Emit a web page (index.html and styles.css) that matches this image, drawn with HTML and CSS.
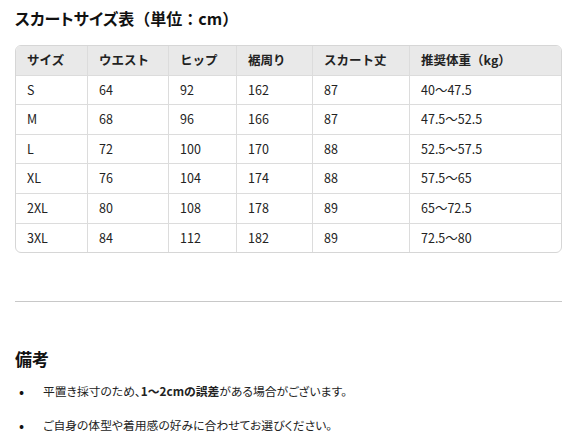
FILE: index.html
```html
<!DOCTYPE html>
<html lang="ja">
<head>
<meta charset="utf-8">
<link rel="stylesheet" href="styles.css">
</head>
<body>
<h2 class="title"><span class="kana">スカートサイズ表</span>（単位：cm）</h2>
<table class="size-table">
  <colgroup>
    <col class="c1"><col class="c2"><col class="c3"><col class="c4"><col class="c5"><col class="c6">
  </colgroup>
  <thead>
    <tr><th>サイズ</th><th>ウエスト</th><th>ヒップ</th><th>裾周り</th><th>スカート丈</th><th>推奨体重（kg）</th></tr>
  </thead>
  <tbody>
    <tr><td>S</td><td>64</td><td>92</td><td>162</td><td>87</td><td>40〜47.5</td></tr>
    <tr><td>M</td><td>68</td><td>96</td><td>166</td><td>87</td><td>47.5〜52.5</td></tr>
    <tr><td>L</td><td>72</td><td>100</td><td>170</td><td>88</td><td>52.5〜57.5</td></tr>
    <tr><td>XL</td><td>76</td><td>104</td><td>174</td><td>88</td><td>57.5〜65</td></tr>
    <tr><td>2XL</td><td>80</td><td>108</td><td>178</td><td>89</td><td>65〜72.5</td></tr>
    <tr><td>3XL</td><td>84</td><td>112</td><td>182</td><td>89</td><td>72.5〜80</td></tr>
  </tbody>
</table>
<hr class="divider">
<h3 class="notes-title">備考</h3>
<ul class="notes">
  <li>平置き採寸のため、<strong>1〜2cmの誤差</strong>がある場合がございます。</li>
  <li>ご自身の体型や着用感の好みに合わせてお選びください。</li>
</ul>
</body>
</html>
```
FILE: styles.css
```css
html, body {
  margin: 0;
  padding: 0;
  background: #fff;
}
body {
  padding: 0 9px 0 15px;
  font-family: "Noto Sans CJK JP", "Noto Sans", sans-serif;
  color: #222;
  font-size: 13px;
}
.title {
  margin: 0;
  padding-top: 6px;
  font-size: 16px;
  line-height: 24px;
  font-weight: bold;
  color: #111;
}
.kana {
  font-feature-settings: "palt";
}
.size-table {
  margin-top: 15px;
  width: 547px;
  table-layout: fixed;
  border-collapse: separate;
  border-spacing: 0;
  border: 1px solid #d6d6d6;
  border-radius: 6px;
  overflow: hidden;
}
.c1 { width: 72px; }
.c2 { width: 81px; }
.c3 { width: 68px; }
.c4 { width: 76px; }
.c5 { width: 97px; }
.size-table th,
.size-table td {
  text-align: left;
  padding: 7px 11px;
  line-height: 14.6px;
  font-size: 12.5px;
  border-right: 1px solid #dcdcdc;
  border-bottom: 1px solid #dcdcdc;
}
.size-table th:last-child,
.size-table td:last-child {
  border-right: none;
}
.size-table tbody tr:last-child td {
  border-bottom: none;
}
.size-table th {
  background: #e9e9e9;
  font-weight: bold;
  color: #222;
}
.divider {
  margin: 48px 0 0 0;
  border: none;
  border-top: 1px solid #c8c8c8;
  height: 0;
}
.notes-title {
  margin: 45px 0 0 0;
  font-size: 17px;
  line-height: 24px;
  font-weight: bold;
  color: #111;
}
.notes {
  margin: 10px 0 0 0;
  padding: 0 0 0 4px;
  list-style: none;
  font-feature-settings: "palt";
}
.notes li {
  display: flex;
  font-size: 11.8px;
  line-height: 20px;
  margin-bottom: 14px;
}
.notes li::before {
  content: "•";
  flex: 0 0 24px;
  font-size: 15px;
  color: #111;
}
.notes strong {
  font-weight: bold;
}
```
